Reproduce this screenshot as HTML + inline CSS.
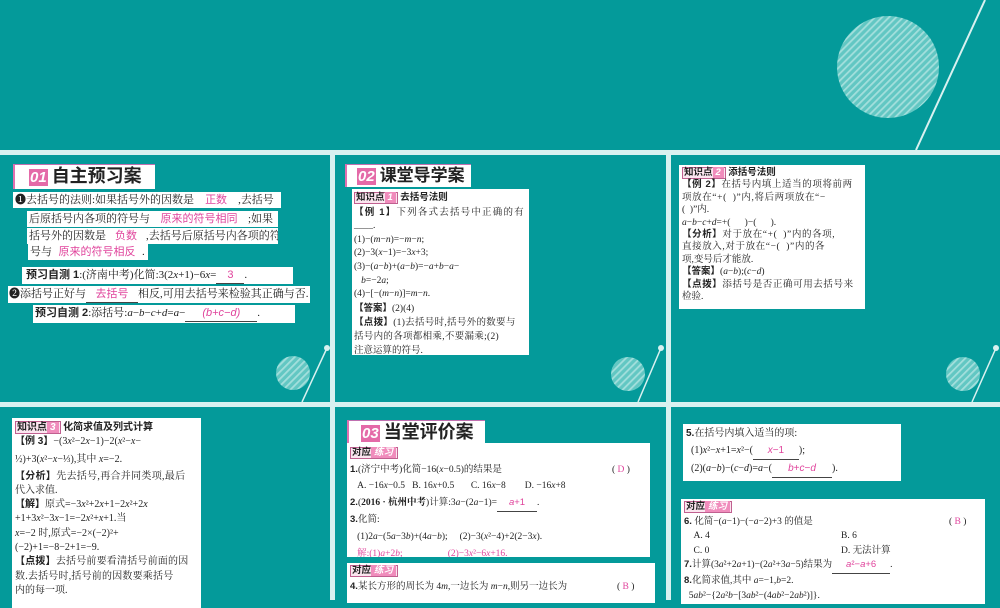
<!DOCTYPE html>
<html><head><meta charset="utf-8"><style>
*{margin:0;padding:0;box-sizing:border-box}
body{width:1000px;height:600px;overflow:hidden;background:#049a9a;position:relative;font-family:"Liberation Serif","Noto Serif CJK SC",serif;color:#222}
.a{position:absolute;white-space:nowrap}
.w{position:absolute;background:#fff;overflow:hidden}
.w div{white-space:nowrap}
.sep{position:absolute;background:#d9f1f0}
.pk{color:#e0449c}
.u{display:inline-block;border-bottom:1px solid #444;text-align:center;color:#e0449c;font-family:"Liberation Sans","Noto Sans CJK SC",sans-serif}
.b{font-weight:bold;font-family:"Liberation Sans","Noto Sans CJK SC",sans-serif}
.hd{position:absolute;background:#fff;border-left:2px solid #e070b0;border-top:1px solid #c070b0;font-family:"Liberation Sans","Noto Sans CJK SC",sans-serif;font-weight:bold;font-size:18px;line-height:22px;color:#222;white-space:nowrap}
.hd .n{display:inline-block;background:#e46aa8;color:#fff;font-size:15px;line-height:17px;padding:0 1px;margin:0 4px 0 14px;font-style:italic}
.tag{display:inline-block;border:1px solid #c06090;background:#fbe5ef;font-family:"Liberation Sans","Noto Sans CJK SC",sans-serif;font-weight:bold;padding:0 1px;line-height:1.1}
.tag i{background:#f08cbc;color:#fff;padding:0 3px;font-style:italic}
</style></head><body>
<svg class="a" style="left:0;top:0" width="1000" height="600">
<defs><pattern id="h" width="5" height="5" patternUnits="userSpaceOnUse" patternTransform="rotate(-45)"><rect width="5" height="5" fill="#62c7c3"/><rect width="5" height="1.8" fill="#a3dfdc"/></pattern></defs>
<circle cx="888" cy="67" r="51" fill="url(#h)"/>
<line x1="985" y1="0" x2="916" y2="150" stroke="#d9f1f0" stroke-width="2"/>
<circle cx="293" cy="373" r="17" fill="url(#h)"/><line x1="327" y1="348" x2="302" y2="402" stroke="#d9f1f0" stroke-width="1.5"/><circle cx="327" cy="348" r="3" fill="#d9f1f0"/>
<circle cx="628" cy="374" r="17" fill="url(#h)"/><line x1="661" y1="348" x2="638" y2="402" stroke="#d9f1f0" stroke-width="1.5"/><circle cx="661" cy="348" r="3" fill="#d9f1f0"/>
<circle cx="963" cy="374" r="17" fill="url(#h)"/><line x1="996" y1="348" x2="972" y2="402" stroke="#d9f1f0" stroke-width="1.5"/><circle cx="996" cy="348" r="3" fill="#d9f1f0"/>
</svg>
<div class="sep" style="left:0;top:150px;width:1000px;height:5px"></div>
<div class="sep" style="left:0;top:402px;width:1000px;height:5px"></div>
<div class="sep" style="left:330px;top:150px;width:5px;height:450px"></div>
<div class="sep" style="left:666px;top:150px;width:5px;height:450px"></div>

<!-- Panel 1 -->
<div class="hd" style="left:13px;top:164px;width:142px;height:25px"><span class="n">01</span>自主预习案</div>
<div style="font-size:11px;line-height:16px">
<div class="w a" style="left:13px;top:192px;width:268px;height:16px;padding-left:2px">❶去括号的法则:如果括号外的因数是<span class="u" style="width:44px">正数</span>,去括号</div>
<div class="w a" style="left:27px;top:211px;width:251px;height:16px;padding-left:2px">后原括号内各项的符号与<span class="u" style="width:98px">原来的符号相同</span>;如果</div>
<div class="w a" style="left:27px;top:228px;width:251px;height:16px;padding-left:2px">括号外的因数是<span class="u" style="width:40px">负数</span>,去括号后原括号内各项的符</div>
<div class="w a" style="left:28px;top:244px;width:120px;height:16px;padding-left:2px">号与<span class="u" style="width:90px">原来的符号相反</span>.</div>
<div class="w a" style="left:22px;top:267px;width:271px;height:17px;padding-left:4px"><span class="b">预习自测 1</span>:(济南中考)化简:3(2<i>x</i>+1)−6<i>x</i>=<span class="u" style="width:28px">3</span>.</div>
<div class="w a" style="left:8px;top:286px;width:302px;height:17px;padding-left:1px">❷添括号正好与<span class="u" style="width:52px">去括号</span>相反,可用去括号来检验其正确与否.</div>
<div class="w a" style="left:33px;top:305px;width:262px;height:18px;padding-left:2px"><span class="b">预习自测 2</span>:添括号:<i>a</i>−<i>b</i>−<i>c</i>+<i>d</i>=<i>a</i>−<span class="u" style="width:72px"><i>(b+c−d)</i></span>.</div>
</div>

<!-- Panel 2 -->
<div class="hd" style="left:345px;top:164px;width:126px;height:23px;font-size:17px"><span class="n" style="margin-left:10px">02</span>课堂导学案</div>
<div class="w" style="left:352px;top:189px;width:177px;height:166px;font-size:9.5px;line-height:13.6px;padding:2px 2px">
<div><span class="tag">知识点<i>1</i></span> <span class="b">去括号法则</span></div>
<div style="letter-spacing:1.2px"><span class="b">【例 1】</span>下列各式去括号中正确的有</div>
<div>____.</div>
<div>(1)−(<i>m</i>−<i>n</i>)=−<i>m</i>−<i>n</i>;</div>
<div>(2)−3(<i>x</i>−1)=−3<i>x</i>+3;</div>
<div>(3)−(<i>a</i>−<i>b</i>)+(<i>a</i>−<i>b</i>)=−<i>a</i>+<i>b</i>−<i>a</i>−</div>
<div>&nbsp;&nbsp;&nbsp;<i>b</i>=−2<i>a</i>;</div>
<div>(4)−[−(<i>m</i>−<i>n</i>)]=<i>m</i>−<i>n</i>.</div>
<div><span class="b">【答案】</span>(2)(4)</div>
<div style="letter-spacing:0.3px"><span class="b">【点拨】</span>(1)去括号时,括号外的数要与</div>
<div style="letter-spacing:0.3px">括号内的各项都相乘,不要漏乘;(2)</div>
<div>注意运算的符号.</div>
</div>

<!-- Panel 3 -->
<div class="w" style="left:679px;top:165px;width:186px;height:144px;font-size:9.5px;line-height:12.4px;padding:2px 3px">
<div><span class="tag">知识点<i>2</i></span> <span class="b">添括号法则</span></div>
<div style="letter-spacing:0.6px"><span class="b">【例 2】</span>在括号内填上适当的项将前两</div>
<div style="letter-spacing:0.6px">项放在“+(&nbsp;&nbsp;)”内,将后两项放在“−</div>
<div>(&nbsp;&nbsp;)”内.</div>
<div><i>a</i>−<i>b</i>−<i>c</i>+<i>d</i>=+(&nbsp;&nbsp;&nbsp;&nbsp;&nbsp;&nbsp;)−(&nbsp;&nbsp;&nbsp;&nbsp;&nbsp;&nbsp;).</div>
<div style="letter-spacing:0.6px"><span class="b">【分析】</span>对于放在“+(&nbsp;&nbsp;)”内的各项,</div>
<div style="letter-spacing:0.6px">直接放入,对于放在“−(&nbsp;&nbsp;)”内的各</div>
<div>项,变号后才能放.</div>
<div><span class="b">【答案】</span>(<i>a</i>−<i>b</i>);(<i>c</i>−<i>d</i>)</div>
<div style="letter-spacing:0.6px"><span class="b">【点拨】</span>添括号是否正确可用去括号来</div>
<div>检验.</div>
</div>

<!-- Panel 4 -->
<div class="w" style="left:12px;top:418px;width:189px;height:190px;font-size:10px;line-height:14.3px;padding:3px 3px">
<div><span class="tag">知识点<i>3</i></span> <span class="b">化简求值及列式计算</span></div>
<div><span class="b">【例 3】</span>−(3<i>x</i>²−2<i>x</i>−1)−2(<i>x</i>²−<i>x</i>−</div>
<div style="line-height:20px">½)+3(<i>x</i>²−<i>x</i>−⅓),其中 <i>x</i>=−2.</div>
<div style="letter-spacing:0.3px"><span class="b">【分析】</span>先去括号,再合并同类项,最后</div>
<div>代入求值.</div>
<div><span class="b">【解】</span>原式=−3<i>x</i>²+2<i>x</i>+1−2<i>x</i>²+2<i>x</i></div>
<div>+1+3<i>x</i>²−3<i>x</i>−1=−2<i>x</i>²+<i>x</i>+1.当</div>
<div><i>x</i>=−2 时,原式=−2×(−2)²+</div>
<div>(−2)+1=−8−2+1=−9.</div>
<div style="letter-spacing:0.2px"><span class="b">【点拨】</span>去括号前要看清括号前面的因</div>
<div style="letter-spacing:0.2px">数.去括号时,括号前的因数要乘括号</div>
<div>内的每一项.</div>
</div>

<!-- Panel 5 -->
<div class="hd" style="left:347px;top:420px;width:138px;height:24px"><span class="n" style="margin-left:12px">03</span>当堂评价案</div>
<div class="w" style="left:347px;top:443px;width:303px;height:114px;font-size:9.5px;line-height:16.6px;padding:2px 3px">
<div><span class="tag">对应<i>练习</i></span></div>
<div><span class="b">1.</span>(济宁中考)化简−16(<i>x</i>−0.5)的结果是<span class="a" style="left:265px">( <span class="pk">D</span> )</span></div>
<div>&nbsp;&nbsp;&nbsp;A. −16<i>x</i>−0.5&nbsp;&nbsp;&nbsp;B. 16<i>x</i>+0.5&nbsp;&nbsp;&nbsp;&nbsp;&nbsp;&nbsp;&nbsp;C. 16<i>x</i>−8&nbsp;&nbsp;&nbsp;&nbsp;&nbsp;&nbsp;&nbsp;&nbsp;D. −16<i>x</i>+8</div>
<div><span class="b">2.</span>(<b>2016 · 杭州中考</b>)计算:3<i>a</i>−(2<i>a</i>−1)=<span class="u" style="width:40px"><i>a</i>+1</span>.</div>
<div><span class="b">3.</span>化简:</div>
<div>&nbsp;&nbsp;&nbsp;(1)2<i>a</i>−(5<i>a</i>−3<i>b</i>)+(4<i>a</i>−<i>b</i>);&nbsp;&nbsp;&nbsp;&nbsp;&nbsp;(2)−3(<i>x</i>²−4)+2(2−3<i>x</i>).</div>
<div class="pk">&nbsp;&nbsp;&nbsp;解:(1)<i>a</i>+2<i>b</i>;&nbsp;&nbsp;&nbsp;&nbsp;&nbsp;&nbsp;&nbsp;&nbsp;&nbsp;&nbsp;&nbsp;&nbsp;&nbsp;&nbsp;&nbsp;&nbsp;&nbsp;&nbsp;&nbsp;(2)−3<i>x</i>²−6<i>x</i>+16.</div>
</div>
<div class="w" style="left:347px;top:563px;width:308px;height:40px;font-size:9.5px;line-height:16px;padding:0 3px">
<div><span class="tag">对应<i>练习</i></span></div>
<div><span class="b">4.</span>某长方形的周长为 4<i>m</i>,一边长为 <i>m</i>−<i>n</i>,则另一边长为<span class="a" style="left:270px">( <span class="pk">B</span> )</span></div>
</div>

<!-- Panel 6 -->
<div class="w" style="left:683px;top:424px;width:218px;height:57px;font-size:10px;line-height:17px;padding:1px 3px">
<div><span class="b">5.</span>在括号内填入适当的项:</div>
<div>&nbsp;&nbsp;(1)<i>x</i>²−<i>x</i>+1=<i>x</i>²−(<span class="u" style="width:46px"><i>x</i>−1</span>);</div>
<div>&nbsp;&nbsp;(2)(<i>a</i>−<i>b</i>)−(<i>c</i>−<i>d</i>)=<i>a</i>−(<span class="u" style="width:60px"><i>b</i>+<i>c</i>−<i>d</i></span>).</div>
</div>
<div class="w" style="left:681px;top:499px;width:304px;height:105px;font-size:9.5px;line-height:14.6px;padding:1px 3px">
<div><span class="tag">对应<i>练习</i></span></div>
<div><span class="b">6.</span> 化简−(<i>a</i>−1)−(−<i>a</i>−2)+3 的值是<span class="a" style="left:268px">( <span class="pk">B</span> )</span></div>
<div>&nbsp;&nbsp;&nbsp;&nbsp;A. 4<span class="a" style="left:160px">B. 6</span></div>
<div>&nbsp;&nbsp;&nbsp;&nbsp;C. 0<span class="a" style="left:160px">D. 无法计算</span></div>
<div><span class="b">7.</span>计算(3<i>a</i>²+2<i>a</i>+1)−(2<i>a</i>²+3<i>a</i>−5)结果为<span class="u" style="width:58px"><i>a</i>²−<i>a</i>+6</span>.</div>
<div><span class="b">8.</span>化简求值,其中 <i>a</i>=−1,<i>b</i>=2.</div>
<div>&nbsp;&nbsp;5<i>ab</i>²−{2<i>a</i>²<i>b</i>−[3<i>ab</i>²−(4<i>ab</i>²−2<i>ab</i>²)]}.</div>
</div>
</body></html>
